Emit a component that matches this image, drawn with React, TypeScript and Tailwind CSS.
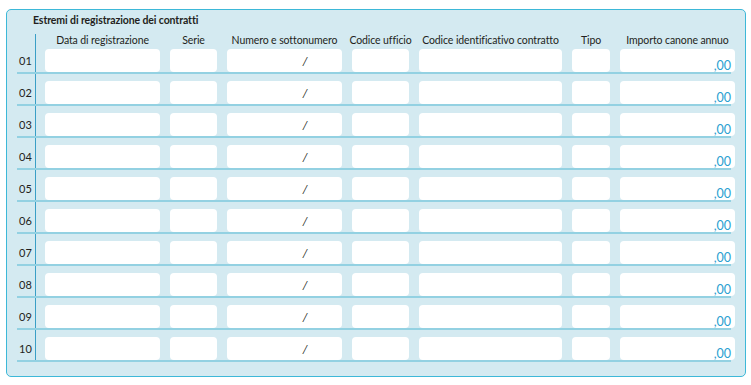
import React from "react";

const cols = [
  { label: "Data di registrazione", w: "w-[115px]", kind: "" },
  { label: "Serie", w: "w-[47px]", kind: "" },
  { label: "Numero e sottonumero", w: "w-[115px]", kind: "slash" },
  { label: "Codice ufficio", w: "w-[57px]", kind: "" },
  { label: "Codice identificativo contratto", w: "w-[143px]", kind: "" },
  { label: "Tipo", w: "w-[38px]", kind: "" },
  { label: "Importo canone annuo", w: "w-[115px]", kind: "amount" },
];

const rows = ["01", "02", "03", "04", "05", "06", "07", "08", "09", "10"];

export default function App() {
  return (
    <div className="w-[751px] h-[385px] bg-white pt-[9px] pl-[6px]" style={{ fontFamily: "Lato, 'Liberation Sans', sans-serif" }}>
      <div className="w-[740px] h-[368px] bg-[#d4eaf1] border border-[#3db8d8] rounded-[5px] flex flex-col">
        <div className="h-[24px] pl-[26px] pt-[3px] text-[10.5px] font-bold text-[#231f20] leading-[14px] tracking-[-0.1px]">
          Estremi di registrazione dei contratti
        </div>
        <div className="pl-[10px] flex flex-col">
          {/* header */}
          <div className="flex h-[15px]">
            <div className="w-[18px]" />
            <div className="flex-1 border-l border-[#3a9fc6] flex gap-[10px] pl-[9px]">
              {cols.map((c) => (
                <div key={c.label} className={`${c.w} shrink-0 flex justify-center items-start`}>
                  <span className="text-[10.5px] leading-[12px] text-[#231f20] whitespace-nowrap tracking-[-0.1px]">{c.label}</span>
                </div>
              ))}
            </div>
          </div>
          {rows.map((r, i) => (
            <div key={r} className={`flex w-[714px] ${i === 0 ? "h-[25px]" : "h-[32px]"} border-b-2 border-[#93d1e2]`}>
              <div className="w-[18px] flex items-end pb-[4px] pl-[2px] text-[11px] text-[#231f20] leading-[14px]">
                <span>{r}</span>
              </div>
              <div className="flex-1 border-l border-[#3a9fc6] flex gap-[10px] pl-[9px] items-end">
                {cols.map((c) => (
                  <div
                    key={c.label}
                    className={`${c.w} shrink-0 h-[23px] bg-white rounded-[4px] flex ${c.kind === "amount" ? "mr-[-4px] justify-end items-end pr-[4px]" : "justify-center items-center"}`}
                  >
                    {c.kind === "slash" && (
                      <span className="text-[12px] text-[#231f20] leading-none ml-[41px] italic">/</span>
                    )}
                    {c.kind === "amount" && (
                      <span className="text-[12.5px] text-[#2a9fd1] leading-none">,00</span>
                    )}
                  </div>
                ))}
              </div>
            </div>
          ))}
        </div>
      </div>
    </div>
  );
}
